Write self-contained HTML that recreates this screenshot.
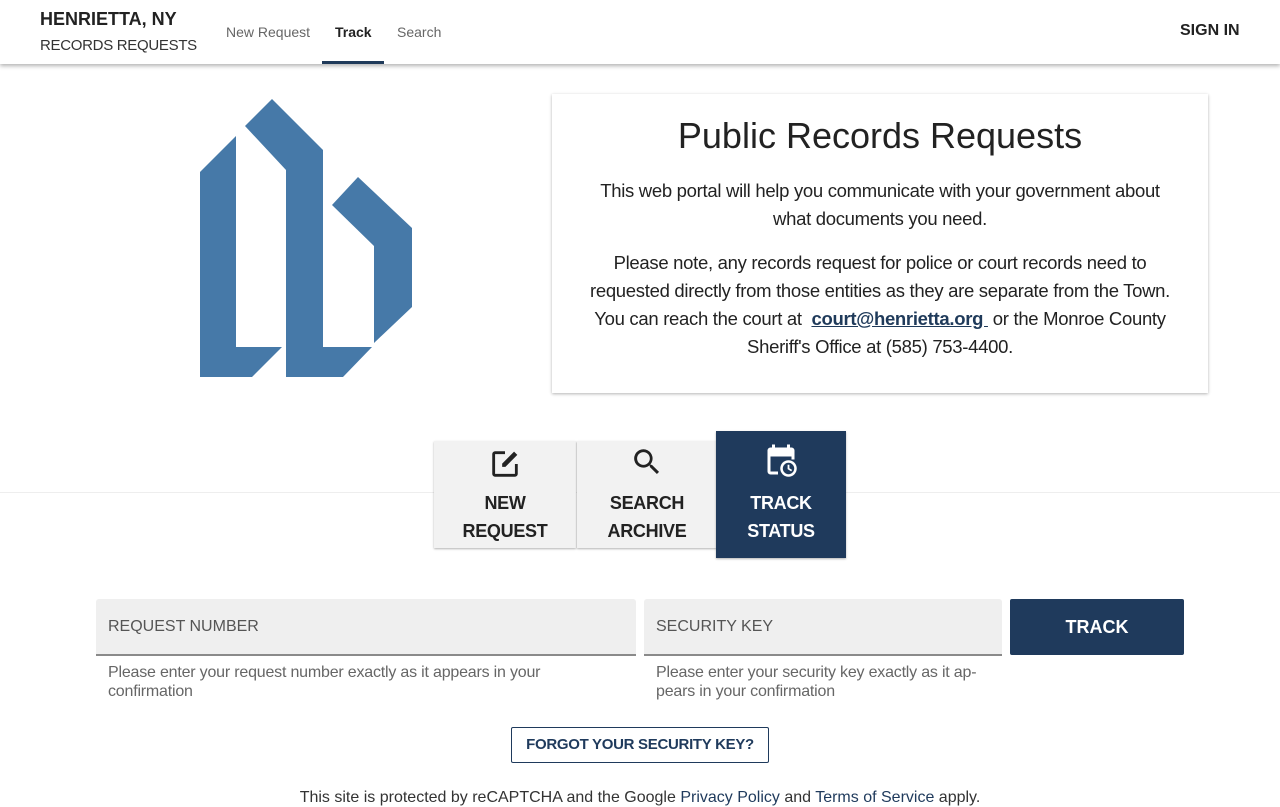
<!DOCTYPE html>
<html><head><meta charset="utf-8"><style>
*{box-sizing:border-box;margin:0;padding:0}
body{width:1280px;height:800px;overflow:hidden;background:#fff;font-family:"Liberation Sans",sans-serif;color:#212121;position:relative}
.hdr{position:absolute;left:0;top:0;width:1280px;height:64px;background:#fff;box-shadow:0 2px 4px rgba(0,0,0,.3);z-index:2}
.abs{position:absolute;white-space:nowrap}
.card{position:absolute;left:552px;top:94px;width:656px;height:299px;background:#fff;box-shadow:0 1px 3px rgba(0,0,0,.3);text-align:center}
.card p{font-size:18.5px;line-height:28px;color:#222;letter-spacing:-.3px;white-space:nowrap}
.tab{position:absolute;top:441px;width:142px;height:107px;background:#f2f2f2;box-shadow:0 1px 2px rgba(0,0,0,.3);text-align:center;font-weight:bold;font-size:18px;line-height:28px;color:#222;letter-spacing:-.3px}
.field{position:absolute;top:599px;height:57px;background:#efefef;border-bottom:2px solid #8a8a8a;border-radius:3px 3px 0 0;font-size:16px;color:#555;padding:19px 12px}
.help{position:absolute;top:663px;font-size:16px;line-height:19px;color:#666;letter-spacing:-.2px}
</style></head><body>
<div class="hdr">
 <div class="abs" style="left:40px;top:9px;font-size:18px;font-weight:bold;color:#222">HENRIETTA, NY</div>
 <div class="abs" style="left:40px;top:37px;font-size:15px;color:#333;letter-spacing:-.3px">RECORDS REQUESTS</div>
 <div class="abs" style="left:226px;top:24px;font-size:14px;color:#666">New Request</div>
 <div class="abs" style="left:335px;top:24px;font-size:14px;color:#222;font-weight:bold">Track</div>
 <div style="position:absolute;left:322px;top:61px;width:62px;height:3px;background:#1f3a5a"></div>
 <div class="abs" style="left:397px;top:24px;font-size:14px;color:#666">Search</div>
 <div class="abs" style="left:1180px;top:22px;font-size:16px;font-weight:bold;color:#222">SIGN IN</div>
</div>
<svg style="position:absolute;left:0;top:0" width="450" height="400">
<g fill="#4679a8">
<polygon points="200,172 236,136 236,347 282,347 252,377 200,377"/>
<polygon points="245,126 272,99 323,150 323,347 372,347 343,377 286,377 286,170"/>
<polygon points="332,205 358,177 412,228 412,307 374,343 374,246"/>
</g></svg>
<div class="card">
 <div style="font-size:36px;margin-top:21px;line-height:42px;color:#222">Public Records Requests</div>
 <p style="margin-top:20px">This web portal will help you communicate with your government about<br>what documents you need.</p>
 <p style="margin-top:16px">Please note, any records request for police or court records need to<br>requested directly from those entities as they are separate from the Town.<br>You can reach the court at &nbsp;<b style="color:#1f3a5a;text-decoration:underline">court@henrietta.org&nbsp;</b> or the Monroe County<br>Sheriff's Office at (585) 753-4400.</p>
</div>
<div style="position:absolute;left:0;top:492px;width:1280px;height:1px;background:#eee"></div>
<div class="tab" style="left:434px">
<svg style="margin-top:6px" width="34" height="34" viewBox="0 0 24 24"><path d="M19 19H5V5h7V3H5a2 2 0 0 0-2 2v14a2 2 0 0 0 2 2h14a2 2 0 0 0 2-2v-7h-2v7zM20.7 5.6l-2.3-2.3-8.4 8.4V14h2.3z" fill="#222"/></svg>
<div style="margin-top:0px">NEW<br>REQUEST</div></div>
<div class="tab" style="left:577px;width:140px">
<svg style="margin-top:4px" width="34" height="34" viewBox="0 0 24 24"><path d="M15.5 14h-.8l-.3-.3A6.5 6.5 0 1 0 9.5 16a6.5 6.5 0 0 0 4.2-1.6l.3.3v.8l5 5 1.5-1.5-5-5zm-6 0C7 14 5 12 5 9.5S7 5 9.5 5 14 7 14 9.5 12 14 9.5 14z" fill="#222"/></svg>
<div style="margin-top:2px">SEARCH<br>ARCHIVE</div></div>
<div class="tab" style="left:716px;top:431px;width:130px;height:127px;background:#1f3a5c;color:#fff">
<svg style="margin-top:12px" width="36" height="36" viewBox="0 0 24 24" fill="#fff"><path d="M6 1h2v2h8V1h2v2h1a2 2 0 0 1 2 2v6h-2V9H5v10h5v2H5a2 2 0 0 1-2-2V5a2 2 0 0 1 2-2h1z"/><circle cx="17" cy="17" r="5.5"/><circle cx="17" cy="17" r="3.8" fill="#1f3a5c"/><path d="M16.4 14.5h1.2v2.3l1.8 1.1-.6 1-2.4-1.5z"/></svg>
<div style="margin-top:2px">TRACK<br>STATUS</div></div>
<div class="field" style="left:96px;width:540px">REQUEST NUMBER</div>
<div class="field" style="left:644px;width:358px">SECURITY KEY</div>
<div style="position:absolute;left:1010px;top:599px;width:174px;height:56px;background:#1f3a5c;color:#fff;font-weight:bold;font-size:18px;text-align:center;line-height:56px;border-radius:2px">TRACK</div>
<div class="help" style="left:108px">Please enter your request number exactly as it appears in your<br>confirmation</div>
<div class="help" style="left:656px">Please enter your security key exactly as it ap-<br>pears in your confirmation</div>
<div style="position:absolute;left:511px;top:727px;width:258px;height:36px;border:1px solid #1f3a5c;border-radius:2px;text-align:center;line-height:34px;font-size:15px;font-weight:bold;color:#1f3a5c;letter-spacing:-.3px">FORGOT YOUR SECURITY KEY?</div>
<div class="abs" style="left:0;width:1280px;top:789px;text-align:center;font-size:16px;color:#333">This site is protected by reCAPTCHA and the Google <span style="color:#1f3a5c">Privacy Policy</span> and <span style="color:#1f3a5c">Terms of Service</span> apply.</div>
</body></html>
